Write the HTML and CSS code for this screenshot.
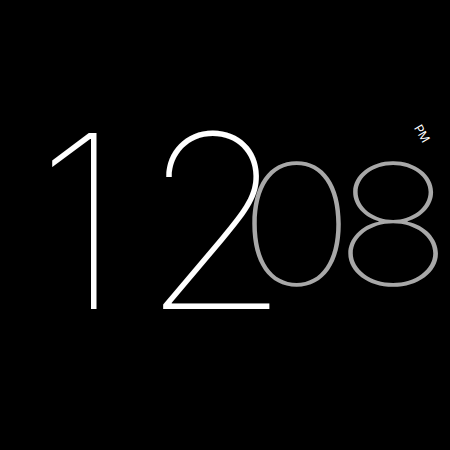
FILE: index.html
```html
<!DOCTYPE html>
<html><head><link rel="stylesheet" href="styles.css"></head>
<body>
<div class="clock">
  <span class="hours">12</span>
  <span class="minutes">08</span>
  <span class="ampm">PM</span>
</div>
</body></html>
```
FILE: styles.css
```css
html,body{margin:0;height:100%;background:#000}
body{overflow:hidden}
.clock{display:flex;align-items:flex-start;padding:100px 0 0 35px;font-family:Inter,"Liberation Sans",sans-serif;font-weight:100}
.hours{position:relative;z-index:1;color:#fff;font-size:242px;line-height:242px;letter-spacing:17px}
.minutes{color:#a8a8a8;font-size:168px;line-height:168px;margin-top:40px;margin-left:-70px;letter-spacing:-18px;transform:scaleX(1.18);transform-origin:left center}
.ampm{color:#fff;font-size:12px;font-weight:400;transform:rotate(60deg);margin-top:26px;margin-left:11px}
```
